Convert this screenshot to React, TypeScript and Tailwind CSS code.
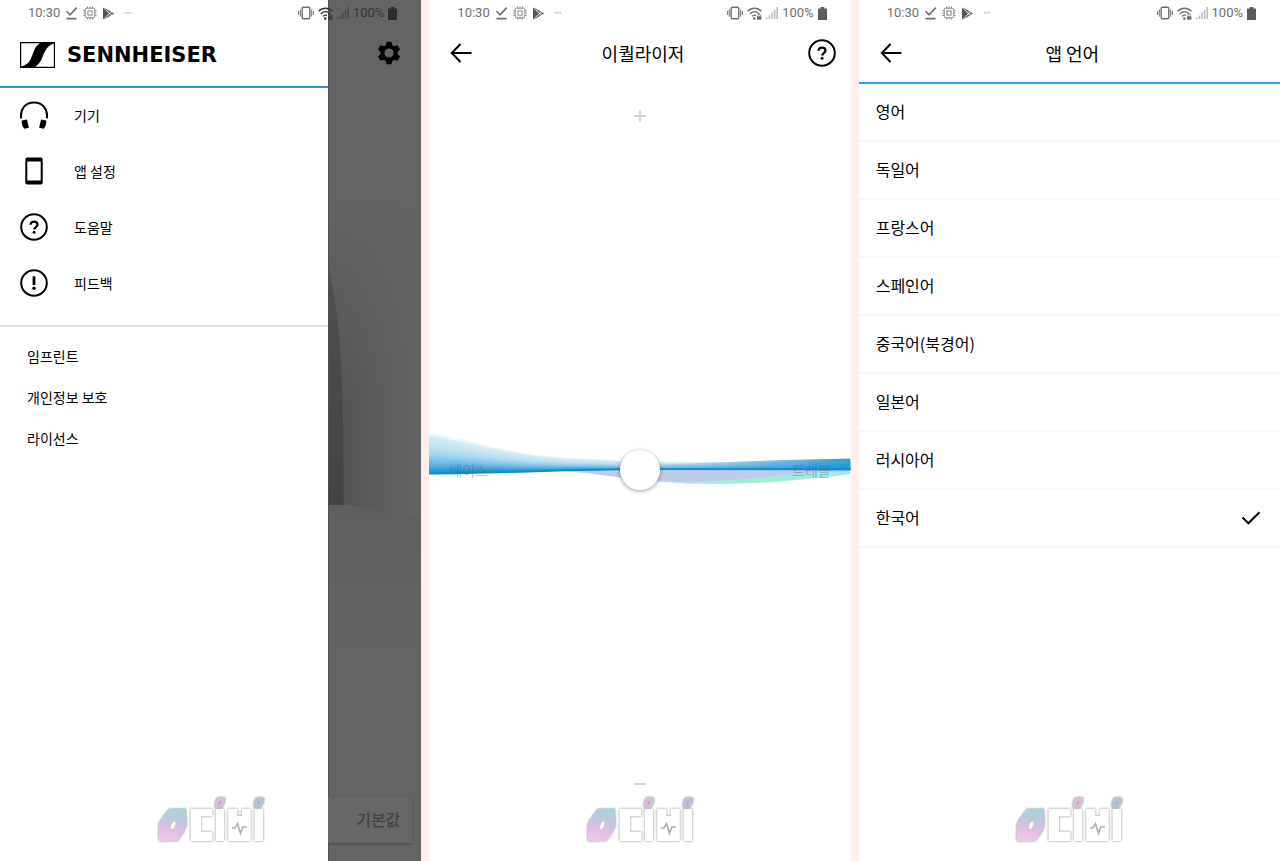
import { type ReactNode } from "react";

const LANGUAGES = ["영어", "독일어", "프랑스어", "스페인어", "중국어(북경어)", "일본어", "러시아어", "한국어"];
const SELECTED = "한국어";
const LEGAL_LINKS = ["임프린트", "개인정보 보호", "라이선스"];

function StatusBar({ dimmed = false }: { dimmed?: boolean }) {
  return (
    <div className="flex h-[26px] items-center justify-between pl-7 pr-6 font-[Roboto,sans-serif] text-[13px] leading-4 text-[#6f6f6f]">
      <div className="flex items-center gap-[5px]">
        <span>10:30</span>
        <svg width="13" height="14" viewBox="0 0 13 14" fill="none" stroke="currentColor" strokeWidth="1.6">
          <path d="M1.5 5.2 5 8.8 11.8 1.6M1.5 12.6h10" />
        </svg>
        <svg width="14" height="14" viewBox="0 0 14 14" fill="none" stroke="#858585" strokeWidth="1">
          <rect x="2.2" y="2.2" width="9.6" height="9.6" rx="1.6" />
          <rect x="4.9" y="4.9" width="4.2" height="4.2" />
          <path d="M4.5 .5v1.500M7 .5v1.500M9.5 .5v1.500M4.5 12v1.500M7 12v1.500M9.5 12v1.500M.5 4.5h1.500M.5 7h1.500M.5 9.5h1.500M12 4.5h1.500M12 7h1.500M12 9.5h1.500" />
        </svg>
        <svg width="13" height="13" viewBox="0 0 13 13">
          <path d="M1 .6 7 6.5 1 12.4z" fill="#555" />
          <path d="M1.8.6 9 4.6 7.6 6 2 .9zM1.8 12.4 9 8.4 7.6 7 2 12.1z" fill="#666" />
          <path d="m9.6 4.9 2.9 1.6-2.9 1.6L8 6.5z" fill="#777" />
        </svg>
        <svg className="ml-1" width="8" height="4" viewBox="0 0 8 4" fill="#bbb">
          <path d="M1 1h1.4v1.4H1zM3.3 1h1.4v1.4H3.3zM5.6 1H7v1.4H5.6z" />
        </svg>
      </div>
      <div className={dimmed ? "flex items-center gap-1 text-[#363636]" : "flex items-center gap-1"}>
        <svg width="16" height="14" viewBox="0 0 16 14" fill="none" stroke={dimmed ? "#6f6f6f" : "currentColor"}>
          <rect x="4.2" y="1.2" width="7.6" height="11.6" rx="1.4" strokeWidth="1.4" />
          <path d="M2.3 3.4v7.2M13.7 3.4v7.2M.6 5v4M15.4 5v4" strokeWidth="1" />
        </svg>
        <svg width="15" height="13" viewBox="0 0 15 13" fill="none" stroke="currentColor" strokeWidth="1.4">
          <path d="M.6 4.3C4.6.2 10.400.2 14.400 4.300M2.800 6.900c2.800-2.800 6.600-2.800 9.400 0M5 9.400c1.200-1.300 2.800-1.500 4-.9" />
          <circle cx="7.300" cy="11.600" r=".6" fill="currentColor" />
          <path d="M10 9.200h4.400v3.500H10z" fill="currentColor" stroke="none" />
          <path d="M11 9.500V8.300c0-1.200 2.400-1.200 2.400 0v1.200" strokeWidth=".9" />
        </svg>
        <svg width="12" height="12" viewBox="0 0 12 12" fill={dimmed ? "#4c4c4c" : "#bdbdbd"}>
          <path d="M0 10.500h1.600V12H0zM2.600 8.400h1.600V12H2.600zM5.200 5.800h1.600V12H5.200zM7.800 3h1.600v9H7.800zM10.400 0H12v12h-1.600z" />
        </svg>
        <span>100%</span>
        <svg width="9" height="13" viewBox="0 0 9 13" fill={dimmed ? "#2c2c2c" : "#5c5c5c"}>
          <path d="M2.700 0h3.600v1.400H9V13H0V1.400h2.700z" />
        </svg>
      </div>
    </div>
  );
}

function CircleIcon({ kind }: { kind: "help" | "alert" }) {
  return (
    <svg width="28" height="28" viewBox="0 0 28 28" fill="none" stroke="#000" strokeWidth="2">
      <circle cx="14" cy="14" r="12.800" />
      {kind === "help" ? (
        <>
          <path d="M10.600 11.800c.1-2 1.500-3.100 3.400-3.100s3.500 1.100 3.500 2.900c0 2.300-3.300 2.600-3.300 4.900" strokeWidth="2.200" />
          <circle cx="14.100" cy="19.300" r="1.500" fill="#000" stroke="none" />
        </>
      ) : (
        <>
          <path d="M14 7.300v8.700" strokeWidth="2.800" />
          <circle cx="14" cy="19.300" r="1.700" fill="#000" stroke="none" />
        </>
      )}
    </svg>
  );
}

function GearIcon() {
  return (
    <svg width="24" height="24" viewBox="0 0 24 24">
      <circle cx="12" cy="12" r="6.600" fill="none" stroke="#000" strokeWidth="4" />
      {[0, 60, 120].map((angle) => (
        <path key={angle} d="M9.500.7h5l.9 3.800H8.600zM9.500 23.300h5l.9-3.800H8.600z" transform={`rotate(${angle} 12 12)`} />
      ))}
    </svg>
  );
}

function HeadphonesIcon() {
  return (
    <svg width="28" height="28" viewBox="0 0 28 28">
      <path d="M1.200 17.400C-.3 8.500 5.300 1.600 14 1.600S28.300 8.500 26.800 17.400" fill="none" stroke="#000" strokeWidth="2" />
      <path d="M3.200 19.300 7 18.600 8.900 26.800 4.300 27.800C2.500 25.800 1.400 22.500 1.700 19.600zM24.800 19.300 21 18.600 19.100 26.800 23.700 27.800C25.500 25.800 26.600 22.500 26.300 19.600z" />
    </svg>
  );
}

function PhoneIcon() {
  return (
    <svg width="28" height="28" viewBox="0 0 28 28">
      <path fillRule="evenodd" d="M7 .5h14a1.700 1.700 0 0 1 1.700 1.700v23.600a1.700 1.700 0 0 1-1.700 1.700H7a1.700 1.700 0 0 1-1.700-1.700V2.200A1.700 1.700 0 0 1 7 .5zM7.300 4.500v19h13.400v-19z" />
    </svg>
  );
}

function BackButton() {
  return (
    <button type="button" aria-label="뒤로" className="cursor-pointer">
      <svg width="22" height="20" viewBox="0 0 22 20" fill="none" stroke="#000" strokeWidth="2">
        <path d="M10.500 1 1.800 10l8.700 9M1.800 10h19.700" />
      </svg>
    </button>
  );
}

function ScreenHeader({ title, action }: { title: string; action?: ReactNode }) {
  return (
    <header className="grid h-14 grid-cols-[28px_1fr_28px] items-center pb-0.5 pl-[21px] pr-[15px]">
      <BackButton />
      <h1 className="text-center text-lg leading-6">{title}</h1>
      {action}
    </header>
  );
}

function Watermark({ id }: { id: string }) {
  return (
    <svg
      className="pointer-events-none absolute bottom-[17px] left-1/2 -translate-x-1/2 drop-shadow-[0_0_1px_rgba(0,0,0,0.5)]"
      width="109"
      height="49"
      viewBox="47 42 327 147"
    >
      <defs>
        <linearGradient id={id} x1=".6" y1="0" x2=".4" y2="1">
          <stop offset="0" stopColor="#a5d5dc" />
          <stop offset=".4" stopColor="#c4c4df" />
          <stop offset=".7" stopColor="#e5bde6" />
          <stop offset="1" stopColor="#f0c8ec" />
        </linearGradient>
      </defs>
      <path
        fillRule="evenodd"
        fill={`url(#${id})`}
        d="M84 84 135 83 137 130Q136 142 128 154L110 179 56 181 53 172 54 130 60 116zM104 116Q91 119 87 137 87 148 90 151 103 147 107 129 107 119 104 116z"
      />
      <g fill="#fff">
        <path d="M149 83h66v23h-34v46h34v28h-66zM225 83h25v97h-25zM262 83h28v22h13V83h27v97h-68zM341 83h26v97h-26z" />
      </g>
      <path fillRule="evenodd" fill="#dcbcdc" d="M228 51Q240 46 253 51 254 66 244 79L223 82Q219 64 228 51zM240 60Q233 62 233 72 240 70 240 60z" />
      <path fillRule="evenodd" fill="#b9c3d8" d="M345 51Q357 46 370 51 371 66 361 79L340 82Q336 64 345 51zM357 60Q350 62 350 72 357 70 357 60z" />
      <path d="M273 141h9l8-13 9 29 7-19h12" fill="none" stroke="#b0b0b0" strokeWidth="5" />
    </svg>
  );
}

function DrawerItem({ icon, label }: { icon: ReactNode; label: string }) {
  return (
    <li>
      <a href="#" className="flex h-14 items-center gap-[26px] pb-0.5 pl-5 text-sm">
        {icon}
        <span className="pb-px">{label}</span>
      </a>
    </li>
  );
}

function Room() {
  return (
    <svg className="absolute inset-y-0 right-0 h-full w-[22.2%]" viewBox="0 0 93 861" preserveAspectRatio="none">
      <defs>
        <linearGradient id="wall">
          <stop offset="0" stopColor="#535353" />
          <stop offset=".25" stopColor="#575757" />
          <stop offset=".75" stopColor="#606060" />
          <stop offset="1" stopColor="#636363" />
        </linearGradient>
        <linearGradient id="wallFade" x1="0" y1="0" x2="0" y2="1">
          <stop offset="0" stopColor="#646464" />
          <stop offset="1" stopColor="#646464" stopOpacity="0" />
        </linearGradient>
        <linearGradient id="niche" x1="0" y1="0" x2="0" y2="1">
          <stop offset="0" stopColor="#505050" />
          <stop offset="1" stopColor="#434343" />
        </linearGradient>
        <linearGradient id="floor" x1="0" y1="0" x2="0" y2="1">
          <stop offset="0" stopColor="#5f5f5f" />
          <stop offset="1" stopColor="#646464" />
        </linearGradient>
      </defs>
      <path d="M0 0h93v861H0z" fill="#646464" />
      <path d="M0 200h93v320H0z" fill="url(#wall)" />
      <path d="M0 200h93v200H0z" fill="url(#wallFade)" />
      <path d="M0 266C10 310 16 350 15.500 505H0z" fill="url(#niche)" />
      <path d="M0 505h16l77 12v130H0z" fill="url(#floor)" />
      <path d="M.5 0v861" stroke="#505050" />
    </svg>
  );
}

function DrawerScreen() {
  return (
    <section className="relative flex flex-col bg-[#646464]">
      <Room />
      <div className="relative mt-[26px] flex h-14 items-center justify-end pb-0.5 pr-5">
        <button type="button" aria-label="설정" className="cursor-pointer">
          <GearIcon />
        </button>
      </div>
      <div className="relative mb-[18px] mt-auto flex justify-end pr-[9px]">
        <button type="button" className="h-[46px] w-full bg-[#676767] pb-0.5 pr-3 text-right text-base font-medium text-[#424242] shadow-[0_1px_2px_#4a4a4a] cursor-pointer">
          기본값
        </button>
      </div>
      <aside className="absolute inset-y-0 left-0 w-[77.8%] bg-white pt-[26px]">
        <div className="flex h-[62px] items-center gap-3 border-b-2 border-[#2f93c6] pb-0.5 pl-5">
          <svg width="35" height="26" viewBox="0 0 35 26">
            <path d="M0 0h35v26H0z" />
            <path d="M1.200 1.300H20C14 4.500 13.500 12 10.500 17.500 8.500 21.200 5.500 23.800 1.200 24.400zM33.800 1.400C28.500 3 26 7 23.500 12.500 21.500 17.500 19.500 22.500 15 24.700H33.800z" fill="#fff" />
          </svg>
          <span className="font-['DejaVu_Sans',sans-serif] text-[21px] font-bold leading-6">SENNHEISER</span>
        </div>
        <nav>
          <ul className="border-b-2 border-[#e4e4e4] pb-[13px]">
            <DrawerItem icon={<HeadphonesIcon />} label="기기" />
            <DrawerItem icon={<PhoneIcon />} label="앱 설정" />
            <DrawerItem icon={<CircleIcon kind="help" />} label="도움말" />
            <DrawerItem icon={<CircleIcon kind="alert" />} label="피드백" />
          </ul>
          <ul className="pt-2">
            {LEGAL_LINKS.map((label) => (
              <li key={label}>
                <a href="#" className="flex h-[41px] items-center pl-[27px] text-sm">{label}</a>
              </li>
            ))}
          </ul>
        </nav>
      </aside>
      <div className="absolute inset-x-0 top-0">
        <StatusBar dimmed />
      </div>
      <Watermark id="markDrawer" />
    </section>
  );
}

type Point = [number, number];

const CREST: Point[] = [[0, 12], [35, 20], [80, 30], [120, 36], [165, 39], [211, 41], [330, 42], [422, 39]];
const BASE: Point[] = [[0, 54], [35, 53], [80, 52], [120, 51], [165, 50], [211, 50], [330, 50], [422, 50]];
const BAND_COLORS = [
  "#eef8fb", "#d6edf5", "#cdeaf4", "#c9e8f3", "#c4e5f2", "#bee2f2", "#b5def1", "#aad9f0",
  "#9ed3ee", "#90cbeb", "#80c3e8", "#6fbbe5", "#5bb1e1", "#45a7dc", "#2e9cd7", "#1692d2",
];

function smooth(points: Point[]) {
  return points.slice(1).map(([x, y], i) => {
    const [px, py] = points[i];
    const mid = (px + x) / 2;
    const [qx, qy] = points[i + 2] ?? [x, y];
    const [ox, oy] = points[i - 1] ?? [px, py];
    const s0 = (y - oy) / (x - ox);
    const s1 = (qy - py) / (qx - px);
    return `C${mid} ${py + s0 * (mid - px)} ${mid} ${y - s1 * (x - mid)} ${x} ${y}`;
  }).join("");
}

function bandPath(t: number) {
  const top = CREST.map(([x, y], i): Point => [x, y + (BASE[i][1] - y) * t]);
  const bottom = [...BASE].reverse();
  return `M${top[0].join(" ")}${smooth(top)}L${bottom[0].join(" ")}${smooth(bottom)}Z`;
}

function Waves() {
  return (
    <svg className="absolute inset-0 size-full" viewBox="0 0 422 100" preserveAspectRatio="none">
      <defs>
        <linearGradient id="treble">
          <stop offset="0" stopColor="#1590d0" stopOpacity="0" />
          <stop offset="1" stopColor="#1590d0" stopOpacity=".85" />
        </linearGradient>
      </defs>
      <path d="M150 51C185 54 210 61 235 62 285 66 350 64 422 54V49H190z" fill="#a2ecdc" />
      <path d="M135 51C165 53 190 58 211 60 250 62 290 62 325 58 360 54 395 52 422 51V49H190z" fill="#bfcaed" />
      {BAND_COLORS.map((color, i) => (
        <path key={color} d={bandPath(i / BAND_COLORS.length)} fill={color} />
      ))}
      <path d="M200 46C270 43 340 40 422 38.500V50.500L211 50z" fill="url(#treble)" />
      <path d="M0 53.800C80 53.500 130 49.700 211 49.300H422" fill="none" stroke="#0c8bcd" strokeWidth="1.400" />
    </svg>
  );
}

function EqualizerScreen() {
  return (
    <section className="relative bg-white">
      <StatusBar />
      <ScreenHeader
        title="이퀄라이저"
        action={
          <button type="button" aria-label="도움말" className="cursor-pointer">
            <CircleIcon kind="help" />
          </button>
        }
      />
      <div className="flex flex-col items-center pt-7">
        <svg width="12" height="12" viewBox="0 0 12 12" stroke="#d4d4d4" strokeWidth="2">
          <path d="M6 0v12M0 6h12" />
        </svg>
        <div className="relative mt-[298px] flex h-[100px] w-full items-center justify-between px-5">
          <Waves />
          <span className="relative w-10 text-sm text-[#466478]/40">베이스</span>
          <button
            type="button"
            aria-label="이퀄라이저 조절"
            className="relative size-10 rounded-full bg-white shadow-[0_1px_4px_rgba(0,0,0,0.4)] cursor-pointer"
          />
          <span className="relative w-10 text-right text-sm text-[#466478]/40">트레블</span>
        </div>
        <svg className="mt-[263px]" width="12" height="2" viewBox="0 0 12 2">
          <path d="M0 0h12v2H0z" fill="#d4d4d4" />
        </svg>
      </div>
      <Watermark id="markEqualizer" />
    </section>
  );
}

function LanguageScreen() {
  return (
    <section className="relative bg-white">
      <StatusBar />
      <ScreenHeader title="앱 언어" />
      <ul className="border-t-2 border-[#3a9fd6]">
        {LANGUAGES.map((language) => (
          <li key={language}>
            <button
              type="button"
              aria-pressed={language === SELECTED}
              className="flex h-[58px] w-full items-center justify-between border-b-2 border-[#f7f7f7] pl-[17px] pr-[19px] text-left text-base cursor-pointer"
            >
              <span className="pb-0.5">{language}</span>
              {language === SELECTED && (
                <svg width="20" height="14" viewBox="0 0 20 14" fill="none" stroke="#000" strokeWidth="2">
                  <path d="M1.500 6.500 7.300 12.300 18.500 1.200" />
                </svg>
              )}
            </button>
          </li>
        ))}
      </ul>
      <Watermark id="markLanguage" />
    </section>
  );
}

export default function App() {
  return (
    <main className="grid min-h-screen grid-cols-3 gap-2 bg-[#ffeeec] font-['Noto_Sans_CJK_KR',sans-serif] text-black">
      <DrawerScreen />
      <EqualizerScreen />
      <LanguageScreen />
    </main>
  );
}
